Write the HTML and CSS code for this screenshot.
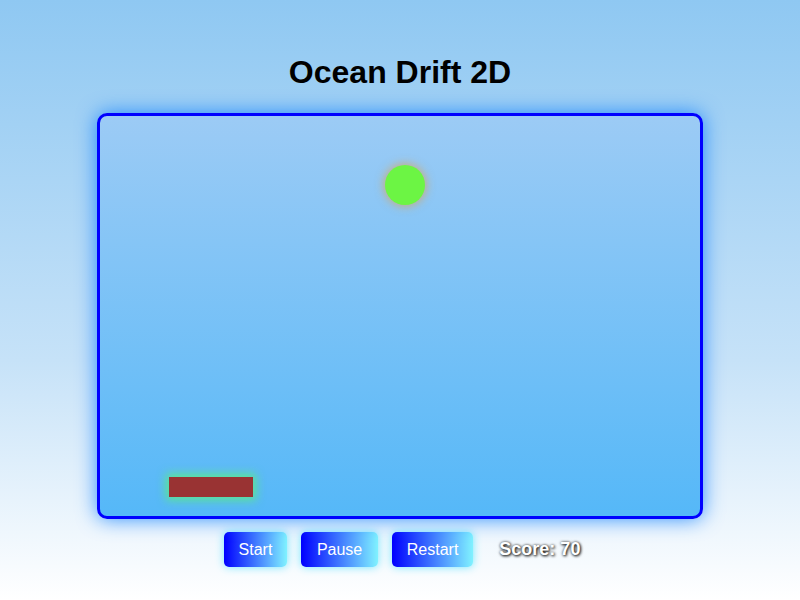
FILE: index.html
```html
<!DOCTYPE html>
<html>
<head>
<meta charset="utf-8">
<link rel="stylesheet" href="styles.css">
</head>
<body>
<div class="page">
  <h1 class="title">Ocean Drift 2D</h1>
  <div class="board">
    <div class="ball"></div>
    <div class="paddle"></div>
  </div>
  <div class="controls">
    <button class="btn">Start</button>
    <button class="btn">Pause</button>
    <button class="btn">Restart</button>
    <span class="score">Score: 70</span>
  </div>
</div>
</body>
</html>
```
FILE: styles.css
```css
html, body {
  margin: 0;
  padding: 0;
  height: 100%;
}
body {
  background: linear-gradient(to bottom, #8fc8f2 0%, #c6e2f8 60%, #ffffff 100%);
  font-family: "Liberation Sans", Arial, sans-serif;
  overflow: hidden;
}
.page {
  display: flex;
  flex-direction: column;
  align-items: center;
  padding-top: 54px;
}
.title {
  margin: 0 0 22px 0;
  font-size: 32px;
  line-height: 37px;
  font-weight: bold;
  color: #000;
}
.board {
  position: relative;
  width: 600px;
  height: 400px;
  border: 3px solid #0000ff;
  border-radius: 10px;
  background: linear-gradient(to bottom, #9ccbf5 0%, #55b8f8 100%);
  box-shadow: 0 0 20px rgba(0, 120, 255, 0.8);
}
.ball {
  position: absolute;
  left: 285px;
  top: 49px;
  width: 40px;
  height: 40px;
  border-radius: 50%;
  background: #6cf544;
  box-shadow: 0 0 10px 1px rgba(230, 160, 60, 0.7);
}
.paddle {
  position: absolute;
  left: 69px;
  top: 361px;
  width: 84px;
  height: 20px;
  background: #993333;
  box-shadow: 0 0 10px 3px rgba(90, 235, 130, 0.9);
}
.controls {
  display: flex;
  align-items: center;
  gap: 14px;
  margin-top: 13px;
  padding-left: 4px;
}
.btn {
  font-family: "Liberation Sans", Arial, sans-serif;
  font-size: 16px;
  line-height: 19px;
  padding: 8px 15px;
  border: none;
  border-radius: 5px;
  color: #fff;
  background: linear-gradient(to right, #0000ff 0%, #80f2ff 100%);
  box-shadow: 0 0 8px rgba(100, 230, 255, 0.9);
}
.btn:nth-child(2) {
  padding: 8px 15.5px;
}
.score {
  margin-left: 12px;
  font-size: 18px;
  font-weight: bold;
  color: #fff;
  text-shadow: 1px 1px 3px #000, 0 0 3px rgba(0,0,0,0.6);
}
```
